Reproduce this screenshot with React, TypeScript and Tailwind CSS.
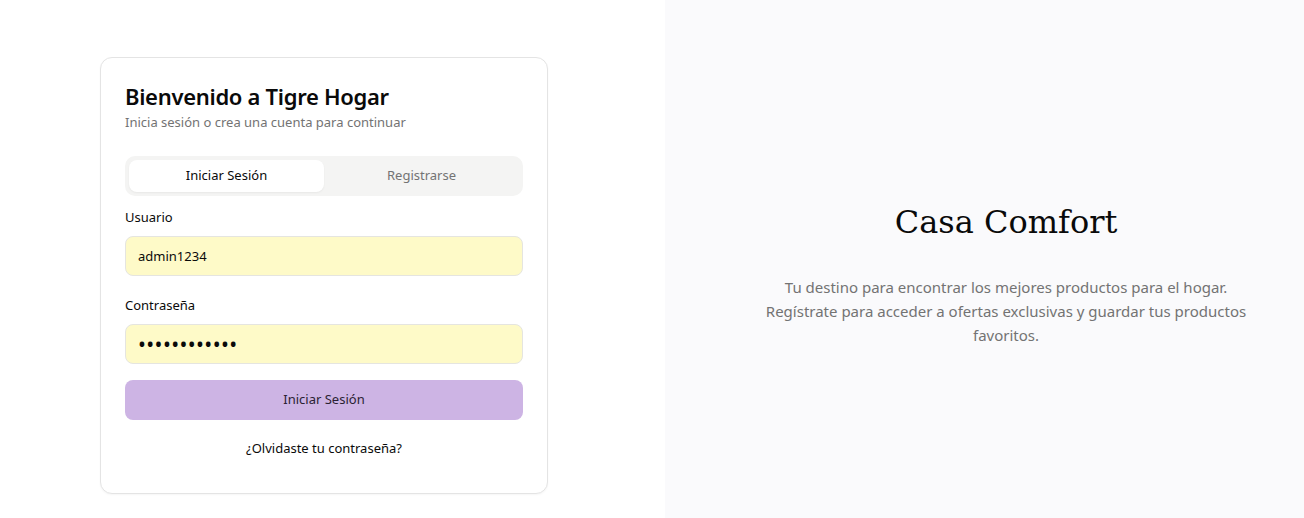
import React, { useState } from 'react';

const sans = { fontFamily: '"Noto Sans", "Open Sans", sans-serif' };

const LoginCard: React.FC = () => {
    const [tab, setTab] = useState<'login' | 'register'>('login');
    const [user, setUser] = useState('admin1234');
    const [pass, setPass] = useState('contraseña12');

    return (
        <div className="w-[448px] rounded-xl border border-[#e4e4e4] bg-white px-6 pt-[22px] pb-[35px] shadow-[0_1px_2px_rgba(0,0,0,0.04)]">
            <h1 className="text-[22px] font-semibold leading-8 tracking-[-0.3px] text-[#0a0a0a]">
                Bienvenido a Tigre Hogar
            </h1>
            <p className="text-[13px] leading-5 text-[#737373]">Inicia sesión o crea una cuenta para continuar</p>

            <div className="mt-[24px] flex h-10 rounded-[10px] bg-[#f4f4f3] p-1">
                <button
                    onClick={() => setTab('login')}
                    className={`flex-1 rounded-lg text-[13px] ${tab === 'login' ? 'bg-white text-[#0a0a0a] shadow-[0_1px_2px_rgba(0,0,0,0.05)]' : 'text-[#737373]'}`}
                >
                    Iniciar Sesión
                </button>
                <button
                    onClick={() => setTab('register')}
                    className={`flex-1 rounded-lg text-[13px] ${tab === 'register' ? 'bg-white text-[#0a0a0a] shadow-[0_1px_2px_rgba(0,0,0,0.05)]' : 'text-[#737373]'}`}
                >
                    Registrarse
                </button>
            </div>

            <label className="mt-[11px] block text-[13px] leading-5 text-[#0a0a0a]">Usuario</label>
            <input
                value={user}
                onChange={(e) => setUser(e.target.value)}
                className="mt-[9px] block h-10 w-full rounded-lg border border-[#e5e5e0] bg-[#fefac8] px-3 text-[13px] text-[#0a0a0a] outline-none"
                style={sans}
            />

            <label className="mt-[19px] block text-[13px] leading-5 text-[#0a0a0a]">Contraseña</label>
            <input
                type="password"
                value={pass}
                onChange={(e) => setPass(e.target.value)}
                className="mt-[9px] block h-10 w-full rounded-lg border border-[#e5e5e0] bg-[#fefac8] px-3 text-[21px] tracking-[0.4px] text-[#0a0a0a] outline-none"
                style={sans}
            />

            <button className="mt-4 h-10 w-full rounded-lg bg-[#cdb4e4] text-[13px] text-[#2a1f33]">
                Iniciar Sesión
            </button>

            <div className="mt-[18px] text-center text-[13px] leading-5 text-[#0a0a0a]">
                <a href="#">¿Olvidaste tu contraseña?</a>
            </div>
        </div>
    );
};

export default function App() {
    return (
        <div className="flex h-[518px] w-full overflow-hidden bg-white" style={sans}>
            <div className="flex w-[665px] shrink-0 items-start pt-[57px] pl-[100px]">
                <LoginCard />
            </div>
            <div className="flex flex-1 flex-col items-center bg-[#fafafc] pt-[200px] pl-[43px]">
                <h2
                    className="text-[32px] leading-[44px] text-[#0a0a0a]"
                    style={{ fontFamily: '"DejaVu Serif", Georgia, serif' }}
                >
                    Casa Comfort
                </h2>
                <p className="mt-[31px] max-w-[500px] text-center text-[15px] leading-6 text-[#737373]">
                    Tu destino para encontrar los mejores productos para el hogar. Regístrate para acceder a ofertas
                    exclusivas y guardar tus productos favoritos.
                </p>
            </div>
        </div>
    );
}
